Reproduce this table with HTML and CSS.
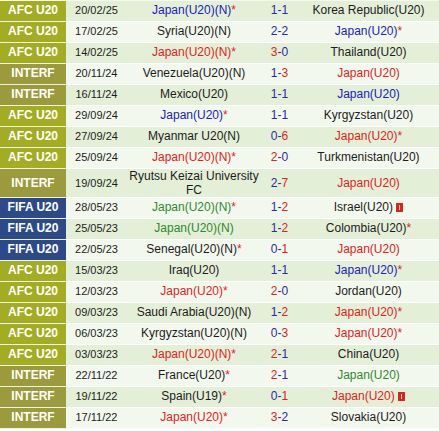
FILE: index.html
```html
<!DOCTYPE html>
<html>
<head>
<meta charset="utf-8">
<link rel="stylesheet" href="styles.css">
</head>
<body>
<table class="matches">
<colgroup>
<col class="c-comp"><col class="c-date"><col class="c-home"><col class="c-score"><col class="c-away">
</colgroup>
<tbody>
<tr><td class="comp afc">AFC U20</td><td class="date">20/02/25</td><td class="home"><span class="jd">Japan(U20)(N)</span><span class="star">*</span></td><td class="score"><span class="l">1</span>-<span class="l">1</span></td><td class="away">Korea Republic(U20)</td></tr>
<tr><td class="comp afc">AFC U20</td><td class="date">17/02/25</td><td class="home">Syria(U20)(N)</td><td class="score"><span class="l">2</span>-<span class="l">2</span></td><td class="away"><span class="jd">Japan(U20)</span><span class="star">*</span></td></tr>
<tr><td class="comp afc">AFC U20</td><td class="date">14/02/25</td><td class="home"><span class="jw">Japan(U20)(N)</span><span class="star">*</span></td><td class="score"><span class="w">3</span>-<span class="l">0</span></td><td class="away">Thailand(U20)</td></tr>
<tr><td class="comp interf">INTERF</td><td class="date">20/11/24</td><td class="home">Venezuela(U20)(N)</td><td class="score"><span class="l">1</span>-<span class="w">3</span></td><td class="away"><span class="jw">Japan(U20)</span></td></tr>
<tr><td class="comp interf">INTERF</td><td class="date">16/11/24</td><td class="home">Mexico(U20)</td><td class="score"><span class="l">1</span>-<span class="l">1</span></td><td class="away"><span class="jd">Japan(U20)</span></td></tr>
<tr><td class="comp afc">AFC U20</td><td class="date">29/09/24</td><td class="home"><span class="jd">Japan(U20)</span><span class="star">*</span></td><td class="score"><span class="l">1</span>-<span class="l">1</span></td><td class="away">Kyrgyzstan(U20)</td></tr>
<tr><td class="comp afc">AFC U20</td><td class="date">27/09/24</td><td class="home">Myanmar U20(N)</td><td class="score"><span class="l">0</span>-<span class="w">6</span></td><td class="away"><span class="jw">Japan(U20)</span><span class="star">*</span></td></tr>
<tr><td class="comp afc">AFC U20</td><td class="date">25/09/24</td><td class="home"><span class="jw">Japan(U20)(N)</span><span class="star">*</span></td><td class="score"><span class="w">2</span>-<span class="l">0</span></td><td class="away">Turkmenistan(U20)</td></tr>
<tr class="tall"><td class="comp interf">INTERF</td><td class="date">19/09/24</td><td class="home">Ryutsu Keizai University FC</td><td class="score"><span class="l">2</span>-<span class="w">7</span></td><td class="away"><span class="jw">Japan(U20)</span></td></tr>
<tr><td class="comp fifa">FIFA U20</td><td class="date">28/05/23</td><td class="home"><span class="jl">Japan(U20)(N)</span><span class="star">*</span></td><td class="score"><span class="l">1</span>-<span class="w">2</span></td><td class="away">Israel(U20) <svg class="card" width="7" height="9" viewBox="0 0 7 9"><rect width="7" height="9" fill="#d8261c"/><rect x="3" y="2" width="1" height="5" fill="#f6c9b8"/></svg></td></tr>
<tr><td class="comp fifa">FIFA U20</td><td class="date">25/05/23</td><td class="home"><span class="jl">Japan(U20)(N)</span></td><td class="score"><span class="l">1</span>-<span class="w">2</span></td><td class="away">Colombia(U20)<span class="star">*</span></td></tr>
<tr><td class="comp fifa">FIFA U20</td><td class="date">22/05/23</td><td class="home">Senegal(U20)(N)<span class="star">*</span></td><td class="score"><span class="l">0</span>-<span class="w">1</span></td><td class="away"><span class="jw">Japan(U20)</span></td></tr>
<tr><td class="comp afc">AFC U20</td><td class="date">15/03/23</td><td class="home">Iraq(U20)</td><td class="score"><span class="l">1</span>-<span class="l">1</span></td><td class="away"><span class="jd">Japan(U20)</span><span class="star">*</span></td></tr>
<tr><td class="comp afc">AFC U20</td><td class="date">12/03/23</td><td class="home"><span class="jw">Japan(U20)</span><span class="star">*</span></td><td class="score"><span class="w">2</span>-<span class="l">0</span></td><td class="away">Jordan(U20)</td></tr>
<tr><td class="comp afc">AFC U20</td><td class="date">09/03/23</td><td class="home">Saudi Arabia(U20)(N)</td><td class="score"><span class="l">1</span>-<span class="w">2</span></td><td class="away"><span class="jw">Japan(U20)</span><span class="star">*</span></td></tr>
<tr><td class="comp afc">AFC U20</td><td class="date">06/03/23</td><td class="home">Kyrgyzstan(U20)(N)</td><td class="score"><span class="l">0</span>-<span class="w">3</span></td><td class="away"><span class="jw">Japan(U20)</span><span class="star">*</span></td></tr>
<tr><td class="comp afc">AFC U20</td><td class="date">03/03/23</td><td class="home"><span class="jw">Japan(U20)(N)</span><span class="star">*</span></td><td class="score"><span class="w">2</span>-<span class="l">1</span></td><td class="away">China(U20)</td></tr>
<tr><td class="comp interf">INTERF</td><td class="date">22/11/22</td><td class="home">France(U20)<span class="star">*</span></td><td class="score"><span class="w">2</span>-<span class="l">1</span></td><td class="away"><span class="jl">Japan(U20)</span></td></tr>
<tr><td class="comp interf">INTERF</td><td class="date">19/11/22</td><td class="home">Spain(U19)<span class="star">*</span></td><td class="score"><span class="l">0</span>-<span class="w">1</span></td><td class="away"><span class="jw">Japan(U20)</span> <svg class="card" width="7" height="9" viewBox="0 0 7 9"><rect width="7" height="9" fill="#d8261c"/><rect x="3" y="2" width="1" height="5" fill="#f6c9b8"/></svg></td></tr>
<tr><td class="comp interf">INTERF</td><td class="date">17/11/22</td><td class="home"><span class="jw">Japan(U20)</span><span class="star">*</span></td><td class="score"><span class="w">3</span>-<span class="l">2</span></td><td class="away">Slovakia(U20)</td></tr>
</tbody>
</table>
</body>
</html>
```

FILE: styles.css
```css
html, body {
  margin: 0;
  padding: 0;
  background: #ffffff;
}

.matches {
  width: 439px;
  table-layout: fixed;
  border-collapse: separate;
  border-spacing: 0;
  border-top: 1px solid #f4f8ef;
  font-family: "Liberation Sans", Arial, sans-serif;
  font-size: 12px;
  color: #1c1c1c;
}

.c-comp { width: 66px; }
.c-date { width: 61px; }
.c-home { width: 134px; }
.c-score { width: 37px; }
.c-away { width: 141px; }

.matches td {
  height: 20px;
  padding: 0;
  line-height: 13.5px;
  text-align: center;
  vertical-align: middle;
  border-bottom: 1px solid #ffffff;
  background: #f3f8ee;
  white-space: nowrap;
}

.matches tr.tall td {
  line-height: 14px;
}

.matches tr.tall td.home {
  white-space: normal;
}

.matches tr:nth-child(odd) td {
  background: #e4efd7;
}

.matches tr td.comp {
  font-weight: bold;
  color: #ffffff;
  border-bottom-color: #eef3df;
}

.matches tr td.afc { background: #a3ac22; }
.matches tr td.interf { background: #9b9a3c; }
.matches tr td.fifa { background: #2c4a88; }

.matches td.date {
  font-size: 11px;
}

.score {
  color: #2a2aa8;
}

.w { color: #e0221b; }
.l { color: #2a2aa8; }

.jw { color: #e0221b; }
.jd { color: #2121b8; }
.jl { color: #2d8a2d; }
.star { color: #e0221b; }

.card {
  vertical-align: -1px;
}
```
